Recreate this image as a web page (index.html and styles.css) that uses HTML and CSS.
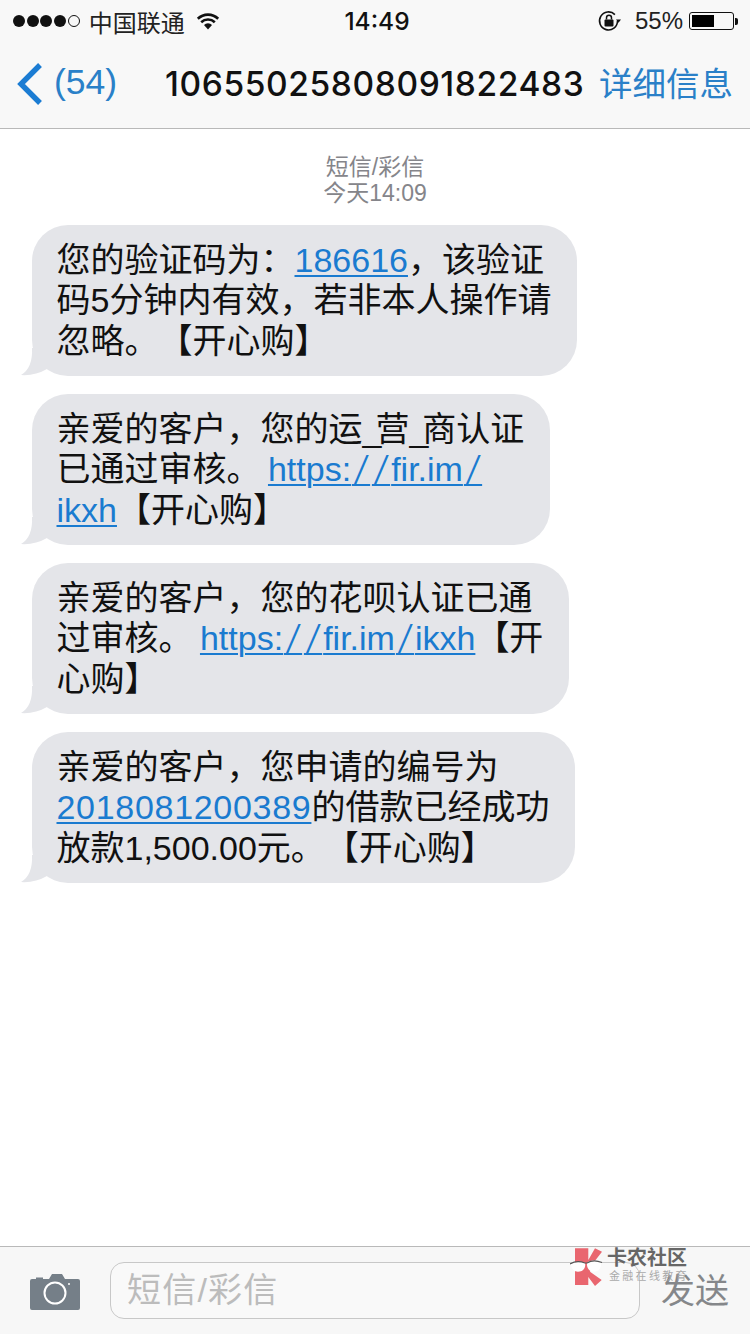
FILE: index.html
```html
<!DOCTYPE html>
<html lang="zh-CN">
<head>
  <meta charset="UTF-8">
  <title>短信/彩信</title>
  <link rel="stylesheet" href="styles.css">
</head>
<body>
  <div class="phone">
    <header class="top">
      <div class="status">
        <div class="status-left">
          <div class="signal">
            <i class="dot"></i><i class="dot"></i><i class="dot"></i><i class="dot"></i><i class="dot empty"></i>
          </div>
          <span class="carrier">中国联通</span>
          <svg class="wifi" width="24" height="18" viewBox="0 0 24 18">
            <path d="M12 17.500 8 13a5.600 5.600 0 0 1 8 0z" fill="#111"/>
            <path d="M5.200 10.200a9.800 9.800 0 0 1 13.600 0M1.800 6.800a14.600 14.600 0 0 1 20.400 0" fill="none" stroke="#111" stroke-width="2.600"/>
          </svg>
        </div>
        <div class="time">14:49</div>
        <div class="status-right">
          <svg class="lock" width="26" height="24" viewBox="0 0 26 24">
            <path d="M20.500 12a9 9 0 1 1-2.600-6.400" fill="none" stroke="#111" stroke-width="1.600"/>
            <path d="M19 10.500h5l-2.500 3.200z" fill="#111"/>
            <rect x="7.500" y="10.500" width="9" height="7" rx="1" fill="#111"/>
            <path d="M9.500 10.500V8.800a2.500 2.500 0 0 1 5 0v1.700" fill="none" stroke="#111" stroke-width="1.500"/>
          </svg>
          <span class="percent">55%</span>
          <div class="battery"><div class="battery-fill"></div></div>
          <div class="battery-tip"></div>
        </div>
      </div>
      <nav class="nav">
        <div class="back">
          <svg width="28" height="44" viewBox="0 0 28 44">
            <path d="M24 3 5 22l19 19" fill="none" stroke="#1b7cd3" stroke-width="5.400"/>
          </svg>
          <span class="back-count">(54)</span>
        </div>
        <div class="number">10655025808091822483</div>
        <div class="details">详细信息</div>
      </nav>
    </header>

    <main class="thread">
      <div class="stamp">短信/彩信<br>今天14:09</div>

      <div class="bubble">您的验证码为：<a class="link">186616</a>，该验证<br>码5分钟内有效，若非本人操作请<br>忽略。【开心购】</div>
      <div class="bubble">亲爱的客户，您的运<span class="underscore">_</span>营<span class="underscore">_</span>商认证<br>已通过审核。 <a class="link">https:<span class="slash">/</span><span class="slash">/</span>fir.im<span class="slash">/</span><br>ikxh</a>【开心购】</div>
      <div class="bubble">亲爱的客户，您的花呗认证已通<br>过审核。 <a class="link">https:<span class="slash">/</span><span class="slash">/</span>fir.im<span class="slash">/</span>ikxh</a>【开<br>心购】</div>
      <div class="bubble">亲爱的客户，您申请的编号为<br><a class="link digits">2018081200389</a>的借款已经成功<br>放款1,500.00元。【开心购】</div>
    </main>

    <footer class="composer">
      <svg class="camera" width="50" height="37" viewBox="0 0 50 37">
        <path d="M2 6h4V4.500h7V6h6l3-5h10l3 5h13a2 2 0 0 1 2 2v27a2 2 0 0 1-2 2H2a2 2 0 0 1-2-2V8a2 2 0 0 1 2-2z" fill="#757f88"/>
        <circle cx="25" cy="20" r="10.500" fill="none" stroke="#fff" stroke-width="2"/>
        <circle cx="39" cy="11" r="1" fill="#fff"/>
      </svg>
      <div class="field">短信/彩信</div>
      <div class="send">发送</div>
    </footer>

    <div class="watermark">
      <svg class="mark-logo" width="36" height="41" viewBox="0 0 36 41">
        <path d="M5 2.300h13.300V14L25 2.300l7 3.400L23.300 17 20 25.700 31.700 34 25 40l-6.700-9v8H5z" fill="#e9666f"/>
        <path d="M1 18c4-2.500 10-3 14-1 1 4-1 8.700-7 8.700-4 0-7-3-7-7.700zM17 16.500c4-2.500 10-2.500 14-.5 1 5-2 9.700-7 9.700-5 0-7.500-4-7-9.200z" fill="#fff"/>
        <path d="M0 18c4-2.500 10-3 15-1h2c4-2.500 10-2.500 15-.5" fill="none" stroke="#555" stroke-width="1.200"/>
      </svg>
      <div class="mark-text">
        <div class="mark-title">卡农社区</div>
        <div class="mark-sub">金融在线教育</div>
      </div>
    </div>
  </div>
</body>
</html>
```

FILE: styles.css
```css
* { box-sizing: border-box; }
html, body { margin: 0; padding: 0; }
body { font-family: "Liberation Sans", "Noto Sans CJK SC", sans-serif; background: #fff; color: #111; text-spacing-trim: space-all; }

.phone { position: relative; width: 750px; height: 1334px; display: flex; flex-direction: column; overflow: hidden; }

/* top bars */
.top { height: 129px; background: #f8f8f8; border-bottom: 1px solid #b9b9b9; }
.status { height: 40px; padding: 2px 12px 0 13px; display: grid; grid-template-columns: 1fr auto 1fr; align-items: center; }
.status-left { display: flex; align-items: center; }
.signal { display: flex; gap: 1.700px; }
.dot { width: 12px; height: 12px; border-radius: 50%; background: #111; }
.dot.empty { background: none; border: 1px solid #111; }
.carrier { margin-left: 9px; font-size: 24px; color: #222; }
.wifi { margin-left: 11px; }
.time { margin-left: 3px; font-family: Inter, sans-serif; font-weight: 500; font-size: 24.500px; color: #111; }
.status-right { display: flex; align-items: center; justify-content: flex-end; }
.lock { margin-right: 12px; }
.percent { font-size: 24px; color: #222; margin-right: 6px; }
.battery { width: 45px; height: 18px; border: 1px solid #111; border-radius: 3px; padding: 2px; }
.battery-fill { width: 22px; height: 100%; background: #000; }
.battery-tip { width: 3px; height: 7px; margin-left: 1px; background: #111; border-radius: 0 2px 2px 0; }

.nav { height: 88px; padding: 0 17px 0 16px; display: flex; align-items: center; }
.back { width: 149px; display: flex; align-items: center; color: #2a80c8; }
.back-count { margin: -3px 0 0 10px; font-size: 35.500px; }
.number { font-family: Inter, sans-serif; font-weight: 500; font-size: 33.500px; letter-spacing: 0.600px; color: #111; white-space: nowrap; }
.details { margin: -5px 0 0 auto; font-size: 33.500px; color: #2a80c8; white-space: nowrap; }

/* messages */
.thread { flex: 1; padding: 25px 0 0 32px; display: flex; flex-direction: column; align-items: flex-start; gap: 18px; }
.stamp { align-self: stretch; margin: 0 0 0 -32px; text-align: center; font-size: 23px; line-height: 26px; color: #85858a; height: 53px; }
.bubble { position: relative; height: 151px; padding: 15px 26px 0 24.500px; background: #e4e5e9; border-radius: 36px; font-size: 34px; line-height: 40.300px; word-spacing: -2px; color: #111; white-space: nowrap; }
.bubble::before { content: ""; position: absolute; left: -11px; bottom: 0; width: 26px; height: 28px; background: #e4e5e9; clip-path: path("M11 0 Q12 20 0 27 Q14 28 26 21 L26 0 Z"); }
.link { color: #1a7bd0; text-decoration: underline; text-decoration-thickness: 2px; text-underline-offset: 3px; }
/* the phone's font has a much wider slash than Liberation */
.slash { display: inline-block; width: 20px; font-family: Inter, sans-serif; font-weight: 200; text-align: center; transform: scaleX(1.600); text-decoration: underline; text-decoration-thickness: 2px; text-underline-offset: 3px; }
.digits { letter-spacing: 0.700px; }
.underscore { letter-spacing: -6px; }

/* composer */
.composer { height: 88px; background: #f7f7f7; border-top: 1px solid #b9b9b9; padding: 15px 0 0 30px; display: flex; align-items: flex-start; }
.camera { margin-top: 11px; }
.field { width: 530px; height: 57px; margin-left: 30px; padding: 4px 16px 0; background: #f9f9f9; border: 1px solid #c8c8c8; border-radius: 14px; font-size: 34px; line-height: 46px; letter-spacing: 1.200px; color: #bcbcbc; }
.send { margin: -2px 0 0 21px; font-size: 34px; line-height: 62px; color: #85878a; }

/* forum watermark laid over the screenshot */
.watermark { position: absolute; left: 570px; top: 1246px; display: flex; gap: 1px; }
.mark-logo { flex: none; }
.mark-text { padding-top: 1px; }
.mark-title { font-size: 20px; line-height: 23px; font-weight: 700; color: #666; }
.mark-sub { margin-left: 2px; font-size: 11px; line-height: 13px; letter-spacing: 2.300px; color: #aaa; }
```
